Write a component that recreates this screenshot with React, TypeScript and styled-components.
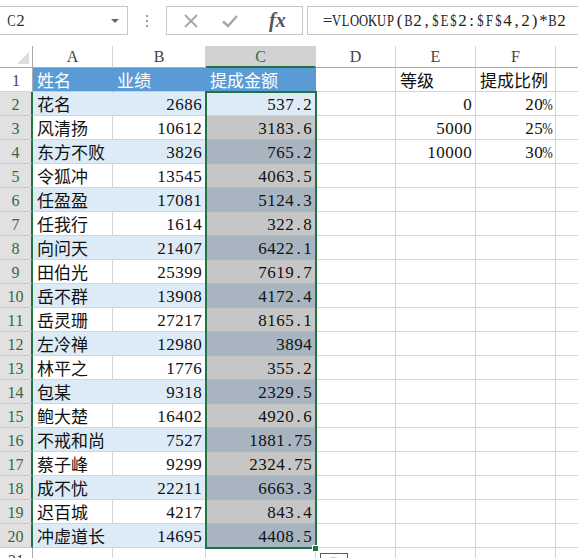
import React from "react";
import styled, { createGlobalStyle } from "styled-components";

const GlobalStyle = createGlobalStyle`
  body {
    margin: 0;
    background: #ffffff;
    font-family: "Liberation Serif", "Noto Sans CJK SC", serif;
    overflow: hidden;
  }
`;

const GREEN = "#217346";
const GRID = "#d4d4d4";

const Page = styled.div`
  width: 578px;
  height: 558px;
  overflow: hidden;
  position: relative;
`;

// fixed-pitch serif text, like the half-width glyphs of SimSun
const MonoChar = styled.span<{ $w: number; $narrow?: boolean }>`
  display: inline-flex;
  justify-content: center;
  width: ${(p) => p.$w}px;
  transform: ${(p) => (p.$narrow ? "scaleX(0.74)" : "none")};
`;

const Mono = ({ text, w = 9 }: { text: string; w?: number }) => (
  <>
    {text.split("").map((ch, i) => (
      <MonoChar key={i} $w={w} $narrow={/[A-Z%$]/.test(ch)}>
        {ch}
      </MonoChar>
    ))}
  </>
);

const FormulaBar = styled.div`
  display: flex;
  align-items: flex-start;
  height: 46px;
  padding-top: 6px;
  box-sizing: border-box;
`;

const NameBox = styled.div`
  width: 128px;
  height: 29px;
  box-sizing: border-box;
  border: 1px solid #c6c6c6;
  border-left: none;
  display: flex;
  align-items: center;
  justify-content: space-between;
  padding: 0 8px 0 7px;
  font-size: 17px;
  color: #333;
`;

const DropArrow = styled.span`
  width: 0;
  height: 0;
  border-left: 4px solid transparent;
  border-right: 4px solid transparent;
  border-top: 4px solid #666;
`;

const Dots = styled.div`
  width: 38px;
  height: 29px;
  display: flex;
  flex-direction: column;
  align-items: center;
  justify-content: center;
  gap: 3px;
  span {
    width: 2px;
    height: 2px;
    background: #9a9a9a;
  }
`;

const IconBox = styled.div`
  width: 137px;
  height: 29px;
  box-sizing: border-box;
  border: 1px solid #c6c6c6;
  display: flex;
  align-items: center;
  padding: 0 8px 0 16px;
  gap: 22px;
`;

const FxText = styled.span`
  font-family: "Liberation Serif", serif;
  font-style: italic;
  font-weight: bold;
  font-size: 20px;
  color: #555;
  margin-left: 8px;
`;

const FormulaInput = styled.div`
  flex: 1;
  height: 29px;
  margin-left: 4px;
  box-sizing: border-box;
  border: 1px solid #c6c6c6;
  border-right: none;
  display: flex;
  align-items: center;
  padding-left: 15px;
  font-size: 17px;
  color: #222;
  white-space: nowrap;
`;

const Sheet = styled.div`
  position: relative;
  display: grid;
  grid-template-columns: 33px 80px 93px 110px 80px 80px 80px 40px;
  grid-template-rows: 22px repeat(21, 24px);
`;

const Corner = styled.div`
  position: relative;
  background: #ffffff;
  border-right: 1px solid #ababab;
  border-bottom: 1px solid #ababab;
  box-sizing: border-box;
  &::after {
    content: "";
    position: absolute;
    right: 3px;
    bottom: 3px;
    width: 0;
    height: 0;
    border-left: 12px solid transparent;
    border-bottom: 12px solid #dcdcdc;
  }
`;

const ColHeader = styled.div<{ $active?: boolean }>`
  box-sizing: border-box;
  display: flex;
  align-items: center;
  justify-content: center;
  font-size: 16px;
  padding-top: 1px;
  background: ${(p) => (p.$active ? "#d2d2d2" : "#ffffff")};
  color: ${(p) => (p.$active ? GREEN : "#444")};
  border-right: 1px solid ${GRID};
  border-bottom: ${(p) => (p.$active ? `2px solid ${GREEN}` : "1px solid #ababab")};
`;

const RowHeader = styled.div<{ $active?: boolean }>`
  box-sizing: border-box;
  display: flex;
  align-items: center;
  justify-content: center;
  font-size: 16px;
  padding-top: 2px;
  background: ${(p) => (p.$active ? "#e1e1e1" : "#ffffff")};
  color: ${(p) => (p.$active ? "#2f6a45" : "#444")};
  border-right: ${(p) => (p.$active ? `2px solid ${GREEN}` : "1px solid #ababab")};
  border-bottom: 1px solid ${(p) => (p.$active ? "#c8c8c8" : GRID)};
`;

const Cell = styled.div<{
  $fill: string;
  $vline: string;
  $hline: string;
  $right?: boolean;
  $cjk?: boolean;
  $color: string;
}>`
  box-sizing: border-box;
  display: flex;
  align-items: center;
  justify-content: ${(p) => (p.$right ? "flex-end" : "flex-start")};
  padding: ${(p) => (p.$cjk ? "0 3px 0 4px" : "2px 3px 0 4px")};
  background: ${(p) => p.$fill};
  color: ${(p) => p.$color};
  border-right: 1px solid ${(p) => p.$vline};
  border-bottom: 1px solid ${(p) => p.$hline};
  font-family: ${(p) =>
    p.$cjk ? `"Noto Sans CJK SC", sans-serif` : `"Liberation Serif", serif`};
  font-size: 17px;
  white-space: nowrap;
  overflow: hidden;
`;

const Selection = styled.div`
  position: absolute;
  left: 205px;
  top: 45px;
  width: 112px;
  height: 458px;
  box-sizing: border-box;
  border: 2px solid ${GREEN};
  pointer-events: none;
`;

const FillHandle = styled.div`
  position: absolute;
  left: 312px;
  top: 499px;
  width: 7px;
  height: 7px;
  box-sizing: border-box;
  background: ${GREEN};
  border: 1px solid #ffffff;
`;

const QuickAnalysis = styled.div`
  position: absolute;
  left: 320px;
  top: 507px;
  width: 28px;
  height: 24px;
  box-sizing: border-box;
  border: 1px solid #3c6e52;
  background: #ffffff;
  &::after {
    content: "";
    position: absolute;
    left: 8px;
    top: 3px;
    width: 9px;
    height: 6px;
    border-radius: 3px 3px 0 0;
    background: #f3c96b;
  }
`;

const people: [string, number, string][] = [
  ["花名", 2686, "537.2"],
  ["风清扬", 10612, "3183.6"],
  ["东方不败", 3826, "765.2"],
  ["令狐冲", 13545, "4063.5"],
  ["任盈盈", 17081, "5124.3"],
  ["任我行", 1614, "322.8"],
  ["向问天", 21407, "6422.1"],
  ["田伯光", 25399, "7619.7"],
  ["岳不群", 13908, "4172.4"],
  ["岳灵珊", 27217, "8165.1"],
  ["左冷禅", 12980, "3894"],
  ["林平之", 1776, "355.2"],
  ["包某", 9318, "2329.5"],
  ["鲍大楚", 16402, "4920.6"],
  ["不戒和尚", 7527, "1881.75"],
  ["蔡子峰", 9299, "2324.75"],
  ["成不忧", 22211, "6663.3"],
  ["迟百城", 4217, "843.4"],
  ["冲虚道长", 14695, "4408.5"],
];

const levels: [string, string][] = [
  ["0", "20%"],
  ["5000", "25%"],
  ["10000", "30%"],
];

const letters = ["A", "B", "C", "D", "E", "F", ""];

type Spec = {
  text: string;
  cjk?: boolean;
  right?: boolean;
  fill: string;
  vline: string;
  hline: string;
  color: string;
};

const cellSpec = (r: number, c: number): Spec => {
  const spec: Spec = { text: "", fill: "#ffffff", vline: GRID, hline: GRID, color: "#111" };

  if (r === 1) {
    const heads = ["姓名", "业绩", "提成金额", "", "等级", "提成比例", ""];
    spec.text = heads[c];
    spec.cjk = true;
  } else if (r <= 20) {
    const p = people[r - 2];
    if (c === 0) {
      spec.text = p[0];
      spec.cjk = true;
    }
    if (c === 1) {
      spec.text = String(p[1]);
      spec.right = true;
    }
    if (c === 2) {
      spec.text = p[2];
      spec.right = true;
    }
    if ((c === 4 || c === 5) && r <= 4) {
      spec.text = levels[r - 2][c - 4];
      spec.right = true;
    }
  }

  if (c <= 2 && r === 1) {
    spec.fill = "#5b9bd5";
    spec.vline = "#5b9bd5";
    spec.hline = "#b9d3ec";
    spec.color = "#ffffff";
  } else if (c <= 2 && r <= 20) {
    const even = r % 2 === 0;
    if (c === 2 && r >= 3) {
      spec.fill = even ? "#a9b4c1" : "#c6c6c6";
      spec.vline = spec.fill;
      spec.hline = "#b7b7b7";
    } else {
      spec.fill = even ? "#ddebf7" : "#ffffff";
      spec.vline = even ? "#ddebf7" : GRID;
    }
  }
  return spec;
};

const App = () => {
  const rows = Array.from({ length: 21 }, (_, i) => i + 1);

  return (
    <Page>
      <GlobalStyle />
      <FormulaBar>
        <NameBox>
          <span>
            <Mono text="C2" />
          </span>
          <DropArrow />
        </NameBox>
        <Dots>
          <span />
          <span />
          <span />
        </Dots>
        <IconBox>
          <svg width="16" height="16" viewBox="0 0 16 16">
            <path d="M2 2 L14 14 M14 2 L2 14" stroke="#a6a6a6" strokeWidth="1.8" fill="none" />
          </svg>
          <svg width="18" height="16" viewBox="0 0 18 16">
            <path d="M2 8.5 L7 13 L16 3" stroke="#a6a6a6" strokeWidth="2.4" fill="none" />
          </svg>
          <FxText>fx</FxText>
        </IconBox>
        <FormulaInput>
          <Mono text="=VLOOKUP(B2,$E$2:$F$4,2)*B2" />
        </FormulaInput>
      </FormulaBar>

      <Sheet>
        <Corner />
        {letters.map((l, i) => (
          <ColHeader key={"h" + i} $active={l === "C"}>
            {l}
          </ColHeader>
        ))}
        {rows.map((r) => (
          <React.Fragment key={r}>
            <RowHeader $active={r >= 2 && r <= 20}>
              <Mono text={String(r)} w={8} />
            </RowHeader>
            {letters.map((_, c) => {
              const s = cellSpec(r, c);
              return (
                <Cell
                  key={c}
                  $fill={s.fill}
                  $vline={s.vline}
                  $hline={s.hline}
                  $right={s.right}
                  $cjk={s.cjk}
                  $color={s.color}
                >
                  {s.cjk ? s.text : <Mono text={s.text} />}
                </Cell>
              );
            })}
          </React.Fragment>
        ))}
        <Selection />
        <FillHandle />
        <QuickAnalysis />
      </Sheet>
    </Page>
  );
};

export default App;
